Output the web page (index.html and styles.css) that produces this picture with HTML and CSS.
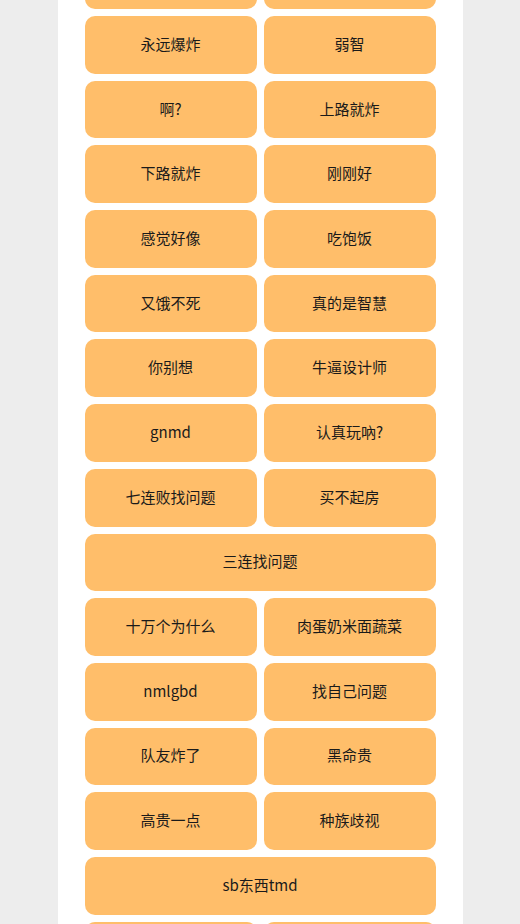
FILE: index.html
```html
<!DOCTYPE html>
<html lang="zh-CN">

<head>
    <meta charset="UTF-8">
    <meta name="viewport" content="width=device-width, initial-scale=1.0">
    <title>词条</title>
    <link rel="stylesheet" href="styles.css">
</head>

<body>
    <div class="page">
        <div class="words">
            <!-- rows above and below the view are scrolled out, so no label shows -->
            <div class="word"></div>
            <div class="word"></div>
            <div class="word">永远爆炸</div>
            <div class="word">弱智</div>
            <div class="word">啊?</div>
            <div class="word">上路就炸</div>
            <div class="word">下路就炸</div>
            <div class="word">刚刚好</div>
            <div class="word">感觉好像</div>
            <div class="word">吃饱饭</div>
            <div class="word">又饿不死</div>
            <div class="word">真的是智慧</div>
            <div class="word">你别想</div>
            <div class="word">牛逼设计师</div>
            <div class="word">gnmd</div>
            <div class="word">认真玩吶?</div>
            <div class="word">七连败找问题</div>
            <div class="word">买不起房</div>
            <div class="word wide">三连找问题</div>
            <div class="word">十万个为什么</div>
            <div class="word">肉蛋奶米面蔬菜</div>
            <div class="word">nmlgbd</div>
            <div class="word">找自己问题</div>
            <div class="word">队友炸了</div>
            <div class="word">黑命贵</div>
            <div class="word">高贵一点</div>
            <div class="word">种族歧视</div>
            <div class="word wide">sb东西tmd</div>
            <div class="word"></div>
            <div class="word"></div>
        </div>
    </div>
</body>

</html>
```

FILE: styles.css
```css
body {
    margin: 0;
    background-color: #ededed;
    font-family: "Noto Sans CJK SC", "Noto Sans", sans-serif;
    overflow: hidden;
}

.page {
    width: 405px;
    height: 924px;
    margin: 0 auto;
    padding: 0 27px;
    box-sizing: border-box;
    background-color: #fff;
    overflow: hidden;
}

.words {
    display: grid;
    grid-template-columns: 1fr 1fr;
    grid-auto-rows: 57.7px;
    gap: 7px;
    margin-top: -48.7px;
}

.word {
    display: flex;
    align-items: center;
    justify-content: center;
    padding-bottom: 3px;
    box-sizing: border-box;
    background-color: #ffbe6a;
    border-radius: 10px;
    color: #1a1a1a;
    font-size: 15px;
}

.word.wide {
    grid-column: span 2;
}
```
